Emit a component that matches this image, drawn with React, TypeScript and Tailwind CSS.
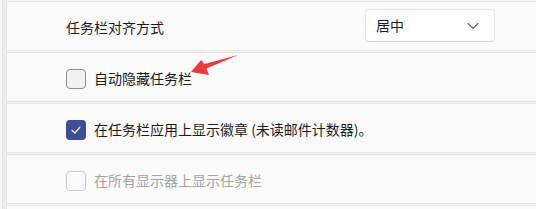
import React from "react";

const font = { fontFamily: '"Noto Sans CJK SC", "Noto Sans", sans-serif' };

function Card({ children }: { children: React.ReactNode }) {
  return (
    <div className="h-[50px] shrink-0 flex items-center pl-[59px] pt-[3px] border border-[#e5e5e5] bg-[#fbfbfc]">
      {children}
    </div>
  );
}

function Check({ state }: { state: "off" | "on" | "disabled" }) {
  if (state === "on") {
    return (
      <span className="w-[20px] h-[20px] rounded-[4px] bg-[#3f4d97] flex items-center justify-center">
        <svg width="12" height="12" viewBox="0 0 12 12" fill="none">
          <path d="M2 6.3 L4.8 9 L10 3.2" stroke="white" strokeWidth="1.2" strokeLinecap="round" strokeLinejoin="round" />
        </svg>
      </span>
    );
  }
  return (
    <span
      className={
        state === "off"
          ? "w-[20px] h-[20px] rounded-[4px] border border-[#8f8f8f] bg-[#f1f1f1]"
          : "w-[20px] h-[20px] rounded-[4px] border border-[#cdcdcd] bg-[#fbfbfc]"
      }
    />
  );
}

export default function App() {
  return (
    <div className="relative w-[536px] h-[209px] overflow-hidden flex bg-[#f3f3f3]" style={font}>
      <div className="w-[6px] shrink-0 flex">
        <div className="w-[2px] bg-[#f7f7f7]" />
        <div className="w-[4px] bg-[#eeeeee] border-l border-[#e3e3e3]" />
      </div>
      <div className="w-[540px] shrink-0 flex flex-col gap-[1px]">
        <div className="h-[1px] bg-[#e5e5e5]" />
        <Card>
          <span className="flex-1 text-[14px] text-[#1b1b1b]">任务栏对齐方式</span>
          <div className="w-[130px] h-[33px] mr-[50px] mt-[-4px] bg-white border border-[#e6e6e6] border-b-[#d4d4d4] rounded-[4px] flex items-center pl-[10px] pr-[15px]">
            <span className="flex-1 text-[14px] text-[#1b1b1b]">居中</span>
            <svg width="12" height="8" viewBox="0 0 12 8" fill="none">
              <path d="M1 1.5 L6 6.3 L11 1.5" stroke="#5c5c5c" strokeWidth="1.1" strokeLinecap="round" strokeLinejoin="round" />
            </svg>
          </div>
        </Card>
        <Card>
          <div className="flex items-center gap-[8px]">
            <Check state="off" />
            <span className="text-[14px] text-[#1b1b1b]">自动隐藏任务栏</span>
          </div>
        </Card>
        <Card>
          <div className="flex items-center gap-[8px]">
            <Check state="on" />
            <span className="text-[14px] text-[#1b1b1b]">在任务栏应用上显示徽章 (未读邮件计数器)。</span>
          </div>
        </Card>
        <Card>
          <div className="flex items-center gap-[8px]">
            <Check state="disabled" />
            <span className="text-[14px] text-[#a3a3a3]">在所有显示器上显示任务栏</span>
          </div>
        </Card>
        <Card>
          <span />
        </Card>
      </div>
      <svg className="absolute left-0 top-0 pointer-events-none" width="536" height="209" viewBox="0 0 536 209">
        <polygon points="191,72 201,60 204.5,64 238,55 206.5,68.5 209,75" fill="#ee3a3a" />
      </svg>
    </div>
  );
}
